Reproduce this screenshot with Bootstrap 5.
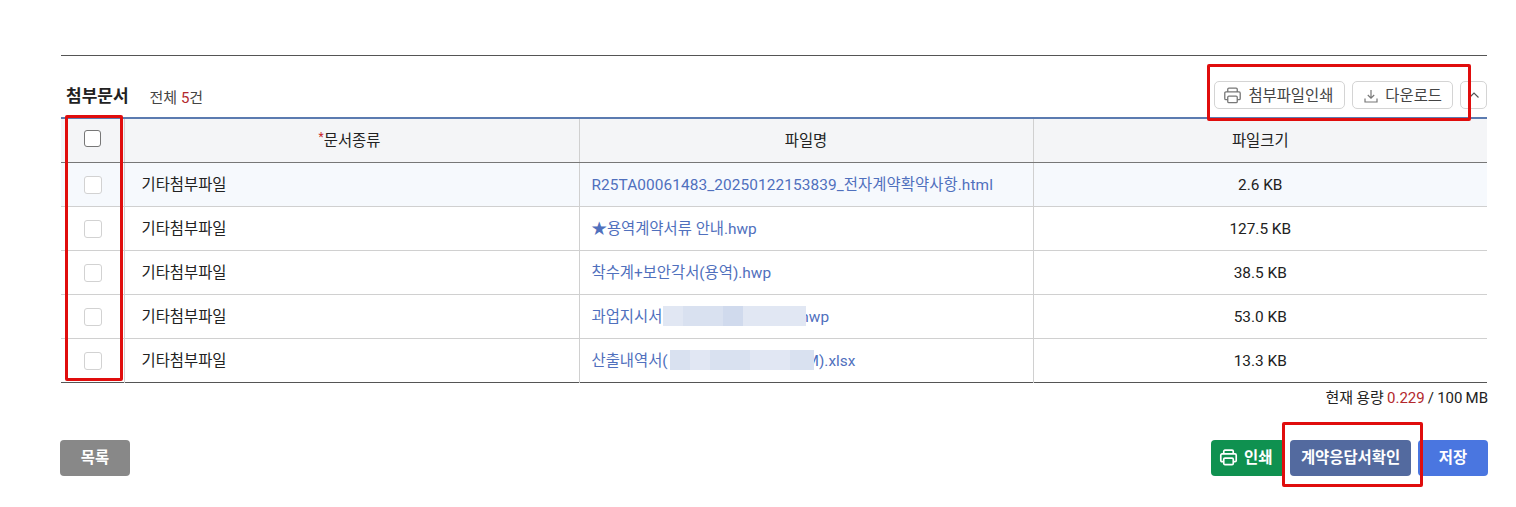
<!DOCTYPE html>
<html lang="ko">
<head>
<meta charset="utf-8">
<title>첨부문서</title>
<link href="https://cdn.jsdelivr.net/npm/bootstrap@5.3.0/dist/css/bootstrap.min.css" rel="stylesheet">
<style>
html,body{height:507px;overflow:hidden;background:#fff}
body{font-family:Roboto,"Noto Sans CJK KR",sans-serif;font-size:15px;color:#222;position:relative}
.page-wrap{padding:55px 29px 0 61px;width:1516px}
.top-rule{border-top:1px solid #555;height:0}
.head-row{height:61px;padding-top:24px}
.doc-title{font-size:17px;font-weight:700;color:#222;line-height:26px;margin-left:5px}
.doc-count{font-size:15px;color:#444;line-height:26px;margin-left:21px;margin-top:5px}
.red-num{color:#b3282d}
.tool-btn{height:28px;border:1px solid #d4d4d4;border-radius:5px;background:#fff;color:#444;font-size:15.4px;line-height:26px;padding:2px 11px 0;display:flex;align-items:center;gap:7px;white-space:nowrap}
.tool-print{padding-left:8px;gap:6px}
.tool-print svg{margin-top:-2px}
.tool-down{padding-right:10px}
.tool-btn.icon-only{width:27px;padding:0;justify-content:center}
.tool-group{gap:7px;margin-top:1px}
.doc-table{width:1426px;table-layout:fixed;border-collapse:collapse;margin:0;border-top:2px solid #5b7bb0;border-bottom:1px solid #555}
.doc-table th,.doc-table td{border-left:1px solid #d0d0d0;border-bottom:1px solid #d0d0d0;padding:3px 0 0;vertical-align:middle;font-size:15.4px;color:#222}
.doc-table td{padding-top:4px}
.doc-table th:first-child,.doc-table td:first-child{border-left:0;padding:0}
.doc-table th{height:44px;background:#f4f5f7;font-weight:400;text-align:center;border-bottom:1px solid #777}
.doc-table td{height:44px;background:#fff}
.doc-table tr.row-hl td{background:#f6f9fd}
.doc-table tbody tr:last-child td{border-bottom:0}
.doc-table .cell-left{padding-left:17px}
.doc-table .cell-file{padding-left:12px}
.doc-table .th-kind{padding-right:4px}
.cell-center{text-align:center}
.file-link{color:#5070bd;text-decoration:none;white-space:nowrap;position:relative;display:inline-block}
.file-wide{letter-spacing:.09px}
.req{color:#c8242a;font-size:12px;vertical-align:5px;line-height:0}
.box{width:18px;height:18px;border:1px solid #d2d2d2;border-radius:3px;background:#fff;display:block;margin:1px 0 0 23px}
.box-head{width:17px;height:17px;border-color:#777;margin-top:-4px}
.blur-gap{display:inline-block}
.blur-bar{position:absolute;top:0;height:20px;display:flex}
.blur-bar i{display:block;height:20px;background:#e1e7f3}
.blur-bar i.d1{background:#d9e1f0}
.blur-bar i.d2{background:#d0daed}
.size-line{font-size:15px;color:#222;text-align:right;line-height:20px;margin-top:5px;margin-right:-1px;word-spacing:-.6px}
.action-row{margin-top:32px;margin-left:-1px;margin-right:-1px}
.act-btn{height:36px;border:0;border-radius:4px;color:#fff;font-size:15.4px;font-weight:700;display:flex;align-items:center;justify-content:center;gap:6px;padding:3px 0 0}
.act-list{width:70px;background:#888}
.act-print{width:74px;background:#0f9150;margin-right:5px;justify-content:flex-start;padding-left:8px}
.act-print svg{margin-top:-3px}
.act-check{width:121px;background:#536a9f;margin-right:7px}
.act-save{width:70px;background:#4a76e0}
.anno{position:absolute;border:3px solid #e00d0d;border-radius:2px;pointer-events:none}
.anno-a{left:65px;top:115px;width:58px;height:266px}
.anno-b{left:1207px;top:64px;width:264px;height:57px}
.anno-c{left:1282px;top:422px;width:141px;height:65px}
</style>
</head>
<body>
<div class="page-wrap">
  <div class="top-rule"></div>
  <div class="head-row d-flex justify-content-between align-items-start">
    <div class="d-flex align-items-center">
      <span class="doc-title">첨부문서</span>
      <span class="doc-count">전체 <span class="red-num">5</span>건</span>
    </div>
    <div class="tool-group d-flex">
      <button type="button" class="tool-btn tool-print">
        <svg width="19" height="19" viewBox="0 0 16 16" fill="none" stroke="#777" stroke-width="1.1"><path d="M4 5V2.800a1 1 0 0 1 1-1h6a1 1 0 0 1 1 1V5"/><path d="M4 11.500H2.500a1 1 0 0 1-1-1V6a1 1 0 0 1 1-1h11a1 1 0 0 1 1 1v4.500a1 1 0 0 1-1 1H12"/><rect x="4" y="8.500" width="8" height="5.500" rx="1"/></svg>
        첨부파일인쇄</button>
      <button type="button" class="tool-btn tool-down">
        <svg width="14" height="14" viewBox="0 0 14 14" fill="none" stroke="#777" stroke-width="1.2"><path d="M7 1v8M3.800 6 7 9.200 10.200 6"/><path d="M1 9.500V13h12V9.500"/></svg>
        다운로드</button>
      <button type="button" class="tool-btn icon-only">
        <svg width="12" height="8" viewBox="0 0 12 8" fill="none" stroke="#555" stroke-width="1.2"><path d="M1.500 6.500 6 2l4.500 4.500"/></svg>
      </button>
    </div>
  </div>
  <table class="doc-table">
    <colgroup><col style="width:63px"><col style="width:455px"><col style="width:454px"><col style="width:454px"></colgroup>
    <thead>
      <tr><th><span class="box box-head"></span></th><th class="th-kind"><span class="req">*</span>문서종류</th><th>파일명</th><th>파일크기</th></tr>
    </thead>
    <tbody>
      <tr class="row-hl"><td><span class="box"></span></td><td class="cell-left">기타첨부파일</td><td class="cell-file"><a class="file-link file-wide" href="#">R25TA00061483_20250122153839_전자계약확약사항.html</a></td><td class="cell-center">2.6 KB</td></tr>
      <tr><td><span class="box"></span></td><td class="cell-left">기타첨부파일</td><td class="cell-file"><a class="file-link" href="#">★용역계약서류 안내.hwp</a></td><td class="cell-center">127.5 KB</td></tr>
      <tr><td><span class="box"></span></td><td class="cell-left">기타첨부파일</td><td class="cell-file"><a class="file-link" href="#">착수계+보안각서(용역).hwp</a></td><td class="cell-center">38.5 KB</td></tr>
      <tr><td><span class="box"></span></td><td class="cell-left">기타첨부파일</td><td class="cell-file"><a class="file-link" href="#">과업지시서<span class="blur-gap" style="width:134px"></span>.hwp<span class="blur-bar" style="left:71px"><i style="width:20px"></i><i class="d1" style="width:40px"></i><i class="d2" style="width:20px"></i><i style="width:63px"></i></span></a></td><td class="cell-center">53.0 KB</td></tr>
      <tr><td><span class="box"></span></td><td class="cell-left">기타첨부파일</td><td class="cell-file"><a class="file-link" href="#">산출내역서(<span class="blur-gap" style="width:138px"></span>M).xlsx<span class="blur-bar" style="left:78px"><i class="d1" style="width:20px"></i><i style="width:20px"></i><i class="d1" style="width:40px"></i><i style="width:40px"></i><i class="d1" style="width:24px"></i></span></a></td><td class="cell-center">13.3 KB</td></tr>
    </tbody>
  </table>
  <div class="size-line">현재 용량 <span class="red-num">0.229</span> / 100 MB</div>
  <div class="action-row d-flex justify-content-between">
    <button type="button" class="act-btn act-list">목록</button>
    <div class="d-flex">
      <button type="button" class="act-btn act-print">
        <svg width="19" height="19" viewBox="0 0 16 16" fill="none" stroke="#fff" stroke-width="1.4"><path d="M4 5V2.800a1 1 0 0 1 1-1h6a1 1 0 0 1 1 1V5"/><path d="M4 11.500H2.500a1 1 0 0 1-1-1V6a1 1 0 0 1 1-1h11a1 1 0 0 1 1 1v4.500a1 1 0 0 1-1 1H12"/><rect x="4" y="8.500" width="8" height="5.500" rx="1"/></svg>
        인쇄</button>
      <button type="button" class="act-btn act-check">계약응답서확인</button>
      <button type="button" class="act-btn act-save">저장</button>
    </div>
  </div>
</div>
<div class="anno anno-a"></div>
<div class="anno anno-b"></div>
<div class="anno anno-c"></div>
</body>
</html>
